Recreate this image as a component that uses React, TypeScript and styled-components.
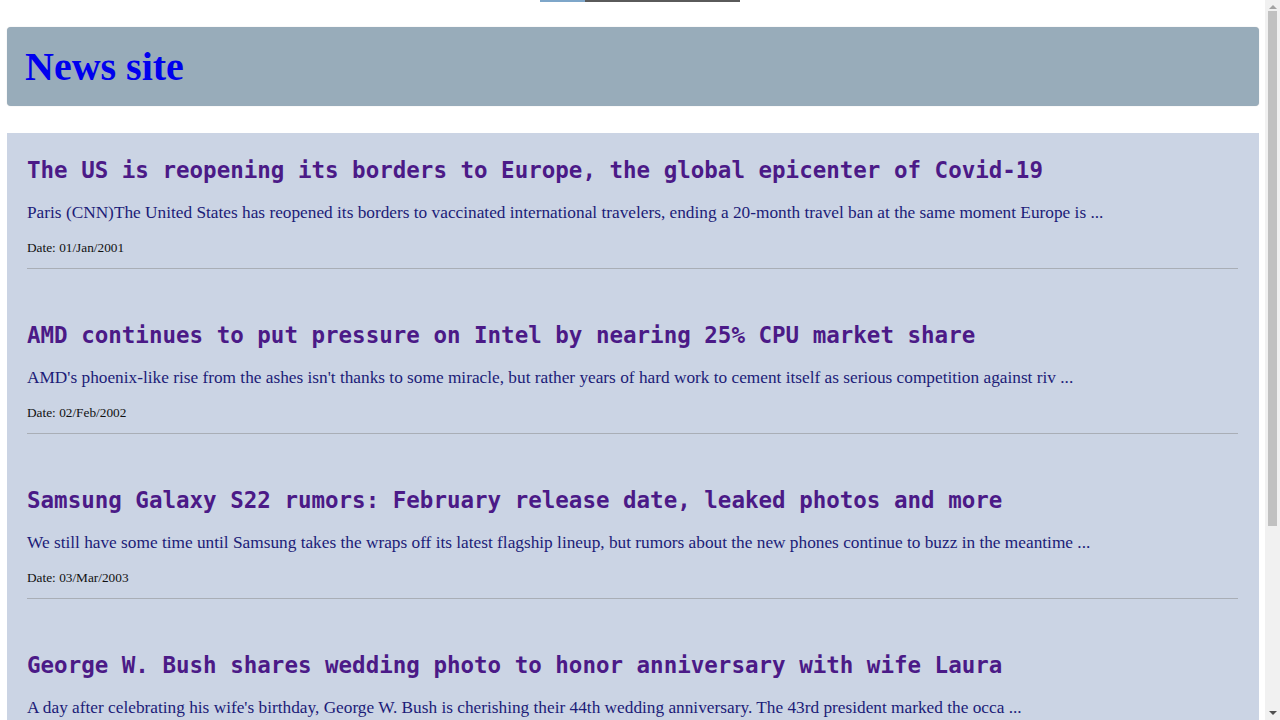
import React from 'react';
import styled, {createGlobalStyle} from "styled-components";

const articles = [
    {
        title: "The US is reopening its borders to Europe, the global epicenter of Covid-19",
        text: "Paris (CNN)The United States has reopened its borders to vaccinated international travelers, ending a 20-month travel ban at the same moment Europe is ...",
        date: "01/Jan/2001",
    },
    {
        title: "AMD continues to put pressure on Intel by nearing 25% CPU market share",
        text: "AMD's phoenix-like rise from the ashes isn't thanks to some miracle, but rather years of hard work to cement itself as serious competition against riv ...",
        date: "02/Feb/2002",
    },
    {
        title: "Samsung Galaxy S22 rumors: February release date, leaked photos and more",
        text: "We still have some time until Samsung takes the wraps off its latest flagship lineup, but rumors about the new phones continue to buzz in the meantime ...",
        date: "03/Mar/2003",
    },
    {
        title: "George W. Bush shares wedding photo to honor anniversary with wife Laura",
        text: "A day after celebrating his wife's birthday, George W. Bush is cherishing their 44th wedding anniversary. The 43rd president marked the occa ...",
        date: "04/Apr/2004",
    },
];

export default function App() {
    return (
        <>
            <GlobalStyle/>
            <LoadingBar><LoadingFill/></LoadingBar>
            <ScrollTrack>
                <ScrollArrow $up/>
                <ScrollThumb/>
                <ScrollArrow/>
            </ScrollTrack>
            <Page>
                <Header>
                    <Logo>News site</Logo>
                </Header>
                <NewsList>
                    {articles.map((a) => (
                        <Article key={a.date}>
                            <Title>{a.title}</Title>
                            <Summary>{a.text}</Summary>
                            <DateText>Date: {a.date}</DateText>
                            <Divider/>
                        </Article>
                    ))}
                </NewsList>
            </Page>
        </>
    );
}

const GlobalStyle = createGlobalStyle`
  body {
    margin: 0;
    background: #ffffff;
    font-family: "Liberation Serif", "Times New Roman", serif;
  }
`

const LoadingBar = styled.div`
  position: absolute;
  top: 0;
  left: 540px;
  width: 200px;
  height: 2px;
  background-color: #5a5a5a;
  overflow: hidden;
`

const LoadingFill = styled.div`
  width: 45px;
  height: 100%;
  background-color: #7ea6c9;
`

const ScrollTrack = styled.div`
  position: fixed;
  top: 0;
  right: 0;
  width: 15px;
  height: 100vh;
  background-color: #f1f1f1;
  display: flex;
  flex-direction: column;
  align-items: center;
  z-index: 10;
`

const ScrollThumb = styled.div`
  width: 9px;
  height: 515px;
  margin-top: 2px;
  background-color: #c1c1c1;
  margin-bottom: auto;
`

const ScrollArrow = styled.div<{ $up?: boolean }>`
  width: 0;
  height: 0;
  margin: ${p => p.$up ? "5px 0 0" : "0 0 5px"};
  border-left: 4px solid transparent;
  border-right: 4px solid transparent;
  ${p => p.$up
          ? "border-bottom: 4px solid #a3a3a3;"
          : "border-top: 4px solid #505050;"}
`

const Page = styled.div`
  padding: 27px 21px 40px 7px;
`

const Header = styled.header`
  height: 79px;
  background-color: #98acba;
  border-radius: 4px;
  padding: 0 18px;
  display: flex;
  align-items: center;
  box-shadow: 0 0 1px rgba(0, 0, 0, 0.25);
`

const Logo = styled.h1`
  margin: 0;
  font-size: 40px;
  font-weight: 700;
  color: #0000ee;
`

const NewsList = styled.main`
  margin-top: 27px;
  background-color: #cbd4e4;
  padding: 23px 21px 20px 20px;
`

const Article = styled.article`
  & + & {
    margin-top: 52px;
  }
`

const Title = styled.h2`
  margin: 0;
  font-family: "DejaVu Sans Mono", "Liberation Mono", monospace;
  font-size: 22.5px;
  line-height: 28px;
  font-weight: 700;
  color: #4b1a87;
`

const Summary = styled.p`
  margin: 19px 0 0;
  font-size: 17.3px;
  color: #1c1c78;
`

const DateText = styled.p`
  margin: 17px 0 0;
  font-size: 13.3px;
  color: #111;
`

const Divider = styled.hr`
  margin: 12px 0 0;
  border: none;
  border-top: 1px solid #a9aeb6;
`
